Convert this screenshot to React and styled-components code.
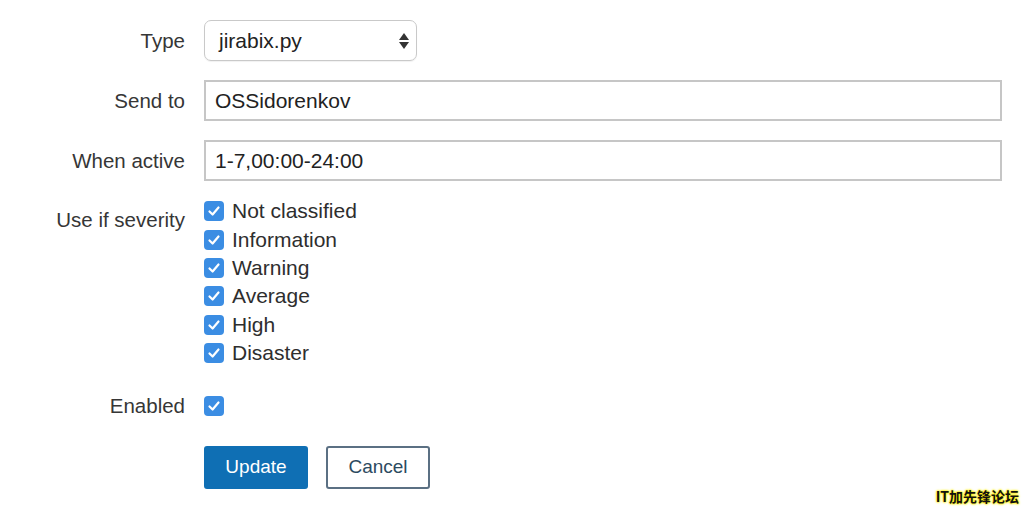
import React from 'react'
import styled, { createGlobalStyle } from 'styled-components'

const GlobalStyle = createGlobalStyle`
  body {
    margin: 0;
    background: #fff;
    font-family: "Liberation Sans", Arial, sans-serif;
    color: #333;
  }
`

const Page = styled.div`
  position: relative;
  width: 1024px;
  height: 510px;
  overflow: hidden;
  background: #fff;
`

const Form = styled.form`
  display: flex;
  flex-direction: column;
  padding: 20px 22px 0 0;
`

const Row = styled.div`
  display: grid;
  grid-template-columns: 185px 1fr;
  column-gap: 19px;
  align-items: ${(p) => (p.top ? 'start' : 'center')};
  margin-bottom: ${(p) => p.gap ?? 19}px;
`

const Label = styled.label`
  font-size: 20.5px;
  color: #363636;
  text-align: right;
  padding-top: ${(p) => p.offset || 0}px;
  line-height: 24px;
`

const SelectBox = styled.div`
  position: relative;
  box-sizing: border-box;
  width: 213px;
  height: 41px;
  border: 1.5px solid #c9c9c9;
  border-radius: 7px;
  box-shadow: 0 1px 1px rgba(0, 0, 0, 0.06);
  display: flex;
  align-items: center;
  padding-left: 14px;
  font-size: 21px;
  color: #222;
`

const Arrows = styled.svg`
  position: absolute;
  right: 6px;
  top: 11px;
`

const TextInput = styled.div`
  box-sizing: border-box;
  height: 41px;
  border: 2px solid #c6c6c6;
  display: flex;
  align-items: center;
  padding-left: 9px;
  font-size: 21px;
  color: #222;
`

const CheckList = styled.div`
  display: flex;
  flex-direction: column;
`

const CheckRow = styled.div`
  display: flex;
  align-items: center;
  gap: 8px;
  height: 28.4px;
  font-size: 21px;
  color: #2e2e2e;
`

const Box = styled.span`
  display: inline-flex;
  align-items: center;
  justify-content: center;
  width: 20px;
  height: 20px;
  border-radius: 4px;
  background: #3b8de3;
  flex: none;
`

const Buttons = styled.div`
  display: flex;
  gap: 18px;
`

const Button = styled.button`
  box-sizing: border-box;
  width: 104px;
  height: 43px;
  border-radius: 3px;
  font-family: "Liberation Sans", Arial, sans-serif;
  font-size: 19px;
  cursor: pointer;
  background: ${(p) => (p.primary ? '#0f6fb4' : '#fff')};
  color: ${(p) => (p.primary ? '#fff' : '#2c4a60')};
  border: 2px solid ${(p) => (p.primary ? '#0f6fb4' : '#5b7083')};
`

const Watermark = styled.div`
  position: absolute;
  right: 5px;
  bottom: 4px;
  font-family: "Noto Sans CJK SC", sans-serif;
  font-size: 14px;
  font-weight: 700;
  color: #111;
  text-shadow: 0 0 2px #ffee00, 0 0 2px #ffee00, 0 0 3px #ffee00;
`

const Check = () => (
  <Box>
    <svg width="14" height="14" viewBox="0 0 14 14">
      <path d="M2.5 7.5 L5.6 10.5 L11.5 3.5" fill="none" stroke="#fff" strokeWidth="2.2" strokeLinecap="round" strokeLinejoin="round" />
    </svg>
  </Box>
)

const severities = ['Not classified', 'Information', 'Warning', 'Average', 'High', 'Disaster']

const App = () => (
  <Page>
    <GlobalStyle />
    <Form>
      <Row>
        <Label>Type</Label>
        <SelectBox>
          jirabix.py
          <Arrows width="12" height="18" viewBox="0 0 12 18">
            <path d="M6 1 L11 8 L1 8 Z" fill="#333" />
            <path d="M6 17 L11 10 L1 10 Z" fill="#333" />
          </Arrows>
        </SelectBox>
      </Row>

      <Row>
        <Label>Send to</Label>
        <TextInput>OSSidorenkov</TextInput>
      </Row>

      <Row gap={16}>
        <Label>When active</Label>
        <TextInput>1-7,00:00-24:00</TextInput>
      </Row>

      <Row top gap={24}>
        <Label offset={11}>Use if severity</Label>
        <CheckList>
          {severities.map((s) => (
            <CheckRow key={s}>
              <Check />
              {s}
            </CheckRow>
          ))}
        </CheckList>
      </Row>

      <Row gap={26}>
        <Label>Enabled</Label>
        <CheckList>
          <CheckRow>
            <Check />
          </CheckRow>
        </CheckList>
      </Row>

      <Row>
        <div />
        <Buttons>
          <Button primary type="button">Update</Button>
          <Button type="button">Cancel</Button>
        </Buttons>
      </Row>
    </Form>
    <Watermark>IT加先锋论坛</Watermark>
  </Page>
)

export default App
